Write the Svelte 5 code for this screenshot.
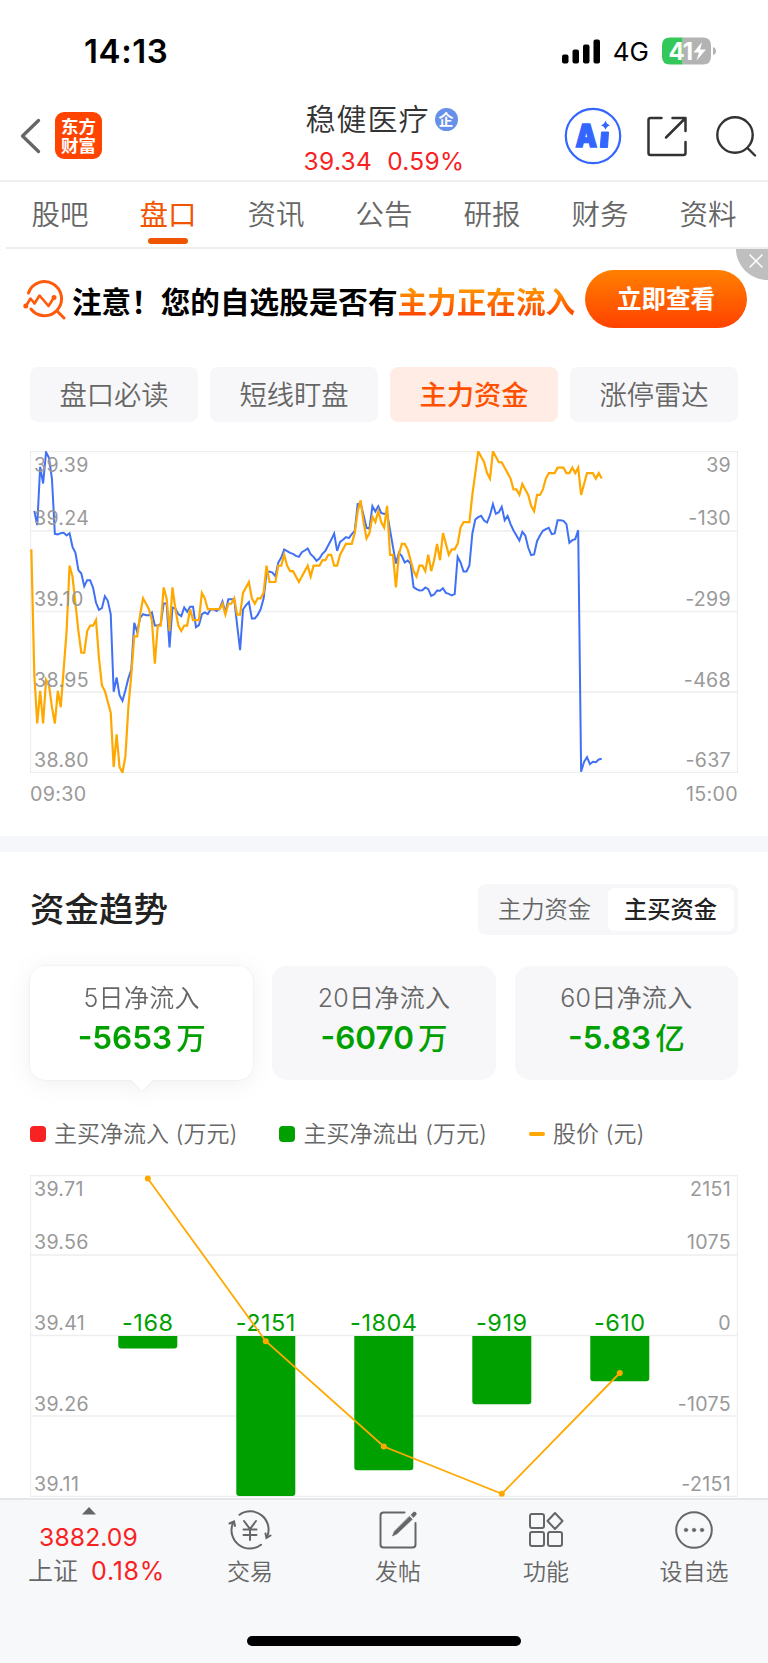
<script lang="ts">
	const tabs = ['股吧', '盘口', '资讯', '公告', '研报', '财务', '资料'];
	const chips = ['盘口必读', '短线盯盘', '主力资金', '涨停雷达'];
	const ranges = [
		{ label: '5日净流入', value: '-5653', unit: '万' },
		{ label: '20日净流入', value: '-6070', unit: '万' },
		{ label: '60日净流入', value: '-5.83', unit: '亿' }
	];

	let activeTab = $state('盘口');
	let activeChip = $state('主力资金');
	let activeMode = $state('主买资金');
	let activeRange = $state(0);
	let showBanner = $state(true);

	const WIDTH = 708;
	const GRID = [0.5, 80, 160.5, 241, 321.5];
	const LABELS = [20.5, 73.5, 154.5, 235.5, 316];

	// Minute prices, in cents above 38.80
	const priceTicks = [
		41, 18, 9, 15, 9, 17, 16, 12, 9, 15, 12, 19, 26, 38, 36, 31, 26, 22, 22, 26, 27, 27, 28, 21, 16,
		15, 13, 11, 1, 7, 1, 0, 3, 12, 18, 25, 25, 29, 32, 31, 30, 28, 20, 27, 27, 34, 32, 26, 34, 30,
		27, 26, 27, 27, 30, 28, 28, 28, 33, 32, 30, 30, 30, 30, 30, 31, 29, 31, 31, 32, 29, 29, 33, 34,
		35, 32, 31, 32, 32, 33, 38, 35, 35, 35, 38, 38, 40, 38, 37, 37, 36, 35, 36, 37, 38, 36, 38, 38,
		38, 39, 39, 40, 40, 38, 38, 40, 41, 42, 42, 42, 44, 48, 50, 46, 43, 44, 47, 46, 48, 46, 45, 49,
		40, 40, 34, 40, 42, 42, 41, 39, 37, 36, 38, 38, 37, 40, 37, 39, 42, 39, 44, 42, 40, 41, 41, 42,
		45, 46, 46, 46, 51, 55, 59, 58, 57, 55, 54, 59, 58, 57, 57, 56, 55, 54, 52, 52, 51, 53, 52, 51,
		49, 48, 51, 51, 52, 54, 55, 55, 55, 56, 56, 56, 55, 55, 56, 55, 56, 51, 53, 55, 55, 55, 54, 55,
		54
	];

	// Net main-force flow per minute, from the second minute on (34 = top of the plot, 998 = bottom)
	const flowTicks = [
		212, 255, 80, 130, 36, 53, 115, 281, 283, 279, 278, 286, 279, 320, 338, 390, 400, 438, 420, 420,
		443, 488, 509, 504, 468, 482, 522, 755, 712, 765, 782, 750, 714, 688, 548, 575, 533, 522, 525,
		525, 517, 556, 556, 552, 490, 490, 622, 502, 505, 522, 528, 502, 515, 500, 500, 561, 555, 522,
		517, 522, 507, 508, 513, 506, 484, 518, 477, 477, 477, 555, 630, 508, 495, 486, 535, 535, 524,
		507, 475, 400, 394, 397, 408, 367, 352, 328, 333, 338, 341, 347, 350, 336, 331, 325, 342, 350,
		362, 355, 341, 332, 315, 299, 280, 332, 305, 299, 291, 294, 282, 272, 192, 190, 225, 263, 265,
		198, 214, 198, 218, 221, 218, 270, 320, 370, 338, 348, 367, 361, 370, 441, 447, 451, 450, 442,
		447, 467, 463, 451, 452, 444, 458, 461, 466, 462, 350, 367, 394, 394, 376, 280, 238, 231, 227,
		241, 247, 225, 192, 221, 216, 200, 240, 227, 252, 271, 286, 301, 275, 286, 322, 345, 343, 303,
		286, 272, 267, 263, 282, 280, 240, 240, 242, 252, 308, 300, 297, 270, 995, 965, 951, 972, 965,
		966, 958, 956
	];

	const minuteX = (i: number) => (1.35 + i * 2.94).toFixed(2);
	const priceLine = priceTicks
		.map((t, i) => `${minuteX(i)},${(321.5 - t * 5.443).toFixed(2)}`)
		.join(' ');
	const flowLine = flowTicks
		.map((t, i) => `${minuteX(i + 1)},${((t - 34) / 3 + 0.5).toFixed(2)}`)
		.join(' ');

	const intradayLeft = ['39.39', '39.24', '39.10', '38.95', '38.80'];
	const intradayRight = ['39', '-130', '-299', '-468', '-637'];
	const trendLeft = ['39.71', '39.56', '39.41', '39.26', '39.11'];
	const trendRight = ['2151', '1075', '0', '-1075', '-2151'];

	const days = [
		{ flow: -168, priceY: 3.5 },
		{ flow: -2151, priceY: 166.2 },
		{ flow: -1804, priceY: 271.5 },
		{ flow: -919, priceY: 318.8 },
		{ flow: -610, priceY: 198 }
	];
	const dayX = (i: number) => 118 * (i + 1) - 0.2;
	const barHeight = (flow: number) => (Math.abs(flow) / 2151) * 160;
	const barPath = (i: number, flow: number) => {
		const l = dayX(i) - 29.5;
		const r = dayX(i) + 29.5;
		const b = 161 + barHeight(flow);
		return `M${l} 161H${r}V${b - 3}Q${r} ${b} ${r - 3} ${b}H${l + 3}Q${l} ${b} ${l} ${b - 3}Z`;
	};
	const dayLine = days.map((d, i) => `${dayX(i)},${d.priceY}`).join(' ');
</script>

{#snippet axes(left: string[], right: string[])}
	{#each left as text, i}
		<text class="axis" x="4" y={LABELS[i]}>{text}</text>
		<text class="axis end" x={WIDTH - 7} y={LABELS[i]}>{right[i]}</text>
	{/each}
{/snippet}

{#snippet grid()}
	{#each GRID as y}
		<line class="grid" x1="0" x2={WIDTH} y1={y} y2={y} />
	{/each}
	<line class="grid" x1="0.5" x2="0.5" y1="0" y2="322" />
	<line class="grid" x1={WIDTH - 0.5} x2={WIDTH - 0.5} y1="0" y2="322" />
{/snippet}

<div class="screen">
	<div class="status">
		<span class="time">14:13</span>
		<div class="status-right">
			<svg class="signal" width="39" height="25" viewBox="0 0 39 25">
				<rect x="0" y="15.5" width="6.5" height="9" rx="2" />
				<rect x="10.5" y="10.5" width="6.5" height="14" rx="2" />
				<rect x="21" y="5.5" width="6.5" height="19" rx="2" />
				<rect x="31.5" y="0.5" width="6.5" height="24" rx="2" />
			</svg>
			<span class="network">4G</span>
			<svg width="54" height="28" viewBox="0 0 54 28">
				<path d="M8 .5H20.700V27.500H8Q0 27.500 0 19.500V8.500Q0 .5 8 .5Z" fill="#34c759" />
				<path d="M20.700 .5H41Q49 .5 49 8.500V19.500Q49 27.500 41 27.500H20.700Z" fill="#b3b3b3" />
				<path d="M51 10Q54 11 54 14T51 18Z" fill="#b3b3b3" />
				<text class="battery-text" x="6.500" y="22.500">41</text>
				<path d="M40 5 31.500 15.500H37L34.500 23.500 44 12.500H38.200Z" fill="#fff" />
			</svg>
		</div>
	</div>

	<header>
		<div class="header-left">
			<svg width="21" height="36" viewBox="0 0 21 36">
				<path d="M18.500 2.500 2.500 18 18.500 33.500" fill="none" stroke="#666" stroke-width="3.300" stroke-linecap="round" stroke-linejoin="round" />
			</svg>
			<div class="app-logo"><span>东方</span><span>财富</span></div>
		</div>
		<div class="stock">
			<div class="stock-name">稳健医疗<span class="badge">企</span></div>
			<div class="stock-price"><span>39.34</span><span>0.59%</span></div>
		</div>
		<div class="header-right">
			<svg width="58" height="58" viewBox="0 0 58 58">
				<circle cx="29" cy="29" r="27.200" fill="none" stroke="#3366ff" stroke-width="2.200" />
				<text class="ai-text" x="11.500" y="39.500" textLength="21.500" lengthAdjust="spacingAndGlyphs">A</text>
				<path d="M37.500 25H44.500L43.500 40.500H36.300Z" fill="#3366ff" stroke="#3366ff" stroke-linejoin="round" />
				<path d="M41.500 13.500Q42.300 17 46 18.200 42.500 19.200 41.500 22.800 40.500 19.200 37 18.200 40.700 17 41.500 13.500Z" fill="#3366ff" />
			</svg>
			<svg class="share" width="40" height="41" viewBox="0 0 40 41" fill="none" stroke="#333" stroke-width="2.500" stroke-linecap="round" stroke-linejoin="round">
				<path d="M14.500 2H3.500Q1.500 2 1.500 4V37Q1.500 39 3.500 39H36.500Q38.500 39 38.500 37V26" />
				<path d="M25.500 2H38.500V15M38 2.500 19 21.500" />
			</svg>
			<svg width="41" height="41" viewBox="0 0 41 41" fill="none" stroke="#333" stroke-width="2.400" stroke-linecap="round">
				<circle cx="19" cy="19" r="17.700" />
				<path d="M31.500 32 39 39.500" />
			</svg>
		</div>
	</header>

	<nav class="tabs">
		{#each tabs as tab}
			<button class="tab" class:active={tab === activeTab} onclick={() => (activeTab = tab)}>{tab}</button>
		{/each}
	</nav>

	{#if showBanner}
		<div class="banner">
			<svg width="43" height="41" viewBox="0 0 43 41" fill="none" stroke="#ff5a0a" stroke-width="3" stroke-linecap="round">
				<path d="M5.500 13A17 17 0 1 1 8 29" />
				<path d="M34 31 41 38" />
				<path d="M3 26 7.500 18.500 11.500 23.500 16.500 15.500 25.500 26 31 17.500" stroke-linejoin="round" stroke-width="2.600" />
				<circle cx="2.800" cy="26" r="1" />
				<circle cx="31" cy="17.500" r="1" />
			</svg>
			<p>注意！您的自选股是否有<em>主力正在流入</em></p>
			<button class="cta">立即查看</button>
			<button class="close" aria-label="关闭" onclick={() => (showBanner = false)}>
				<svg width="32" height="31" viewBox="0 0 32 31">
					<path d="M0 0H32V31A32 31 0 0 1 0 0Z" fill="#bfbfbf" />
					<path d="M14 6 26 18M26 6 14 18" stroke="#fff" stroke-width="1.500" stroke-linecap="round" />
				</svg>
			</button>
		</div>
	{/if}

	<div class="chips">
		{#each chips as chip}
			<button class="chip" class:active={chip === activeChip} onclick={() => (activeChip = chip)}>{chip}</button>
		{/each}
	</div>

	<section class="intraday">
		<svg width={WIDTH} height="322" viewBox="0 0 {WIDTH} 322">
			{@render grid()}
			<polyline points={flowLine} fill="none" stroke="#4071f5" stroke-width="2" />
			<polyline points={priceLine} fill="none" stroke="#ffa800" stroke-width="2.200" />
			{@render axes(intradayLeft, intradayRight)}
		</svg>
		<div class="times"><span>09:30</span><span>15:00</span></div>
	</section>

	<div class="divider"></div>

	<section class="trend">
		<div class="trend-head">
			<h2>资金趋势</h2>
			<div class="switch">
				{#each ['主力资金', '主买资金'] as mode}
					<button class:active={mode === activeMode} onclick={() => (activeMode = mode)}>{mode}</button>
				{/each}
			</div>
		</div>

		<div class="cards">
			{#each ranges as range, i}
				<button class="card" class:active={i === activeRange} onclick={() => (activeRange = i)}>
					<span class="card-label">{range.label}</span>
					<span class="card-value">{range.value}<i>{range.unit}</i></span>
				</button>
			{/each}
		</div>

		<div class="legend">
			<span class="legend-item"><b class="mark red"></b>主买净流入 (万元)</span>
			<span class="legend-item"><b class="mark green"></b>主买净流出 (万元)</span>
			<span class="legend-item"><b class="mark line"></b>股价 (元)</span>
		</div>

		<svg class="trend-chart" width={WIDTH} height="322" viewBox="0 0 {WIDTH} 322">
			{@render grid()}
			{#each days as day, i}
				<path d={barPath(i, day.flow)} fill="#00a000" />
				<text class="bar-label" x={dayX(i)} y="156">{day.flow}</text>
			{/each}
			<polyline points={dayLine} fill="none" stroke="#ffa800" stroke-width="1.800" />
			{#each days as day, i}
				<circle cx={dayX(i)} cy={day.priceY} r="3" fill="#ffa800" />
			{/each}
			{@render axes(trendLeft, trendRight)}
		</svg>
	</section>

	<footer>
		<div class="toolbar">
			<div class="index">
				<svg width="14" height="8" viewBox="0 0 14 8"><path d="M7 0 14 7.500H0Z" fill="#666" /></svg>
				<span class="index-value">3882.09</span>
				<span class="index-row">上证<span>0.18%</span></span>
			</div>
			<div class="tool">
				<svg width="44" height="40" viewBox="0 0 44 40">
					<path d="M11.500 4.800A18.300 18.300 0 0 1 39 27M33 34.700A18.300 18.300 0 0 1 5 13" />
					<path d="M1.500 13.500 6 11.500 7 16M42.500 25.500 38.500 28 37.500 23.500" />
					<path d="M16 11 22 19 28 11M22 19V30M15.500 19.500H28.500M15.500 25H28.500" />
				</svg>
				<span>交易</span>
			</div>
			<div class="tool">
				<svg width="44" height="40" viewBox="0 0 44 40">
					<path d="M28.500 2.500H7.500Q4.500 2.500 4.500 5.500V34.500Q4.500 37.500 7.500 37.500H36.500Q39.500 37.500 39.500 34.500V13" />
					<path class="solid" d="M33.500 6.500 36.300 9.300 21 23.800 16.500 26 18.300 21.500Z" />
					<path class="solid" d="M35 4.800 37.500 2.300Q39 1.500 40 2.800 40.800 4 39.800 5L37.500 7.500Z" />
				</svg>
				<span>发帖</span>
			</div>
			<div class="tool">
				<svg width="44" height="40" viewBox="0 0 44 40">
					<rect x="6" y="4" width="14" height="14" rx="2" />
					<rect x="6" y="22" width="14" height="14" rx="2" />
					<rect x="24" y="22" width="14" height="14" rx="2" />
					<path d="M31 3 38.500 11 31 19 23.500 11Z" stroke-linejoin="round" />
				</svg>
				<span>功能</span>
			</div>
			<div class="tool">
				<svg width="44" height="40" viewBox="0 0 44 40">
					<circle cx="22" cy="20" r="17.800" />
					<circle class="solid" cx="14" cy="20" r="1.800" />
					<circle class="solid" cx="22" cy="20" r="1.800" />
					<circle class="solid" cx="30" cy="20" r="1.800" />
				</svg>
				<span>设自选</span>
			</div>
		</div>
		<div class="home-indicator"></div>
	</footer>
</div>

<style>
	:global(body) {
		margin: 0;
		background: #fff;
	}

	.screen {
		display: flex;
		flex-direction: column;
		width: 768px;
		height: 1663px;
		overflow: hidden;
		background: #fff;
		color: #333;
		font-family: Inter, 'Noto Sans CJK SC', sans-serif;
	}

	svg {
		display: block;
		flex: none;
	}

	button {
		padding: 0;
		border: 0;
		background: none;
		color: inherit;
		font: inherit;
		cursor: pointer;
	}

	.status {
		display: flex;
		align-items: center;
		justify-content: space-between;
		height: 102px;
		padding: 0 52px 0 84px;
		box-sizing: border-box;
		color: #000;
	}

	.time {
		font-size: 33px;
		font-weight: 600;
		letter-spacing: 0.6px;
	}

	.status-right {
		display: flex;
		align-items: center;
	}

	.network {
		margin: 1px 13px 0 12px;
		font-size: 26px;
	}

	.battery-text {
		fill: #fff;
		font-size: 24px;
		font-weight: 700;
		letter-spacing: -1px;
	}

	header {
		display: grid;
		grid-template-columns: 1fr auto 1fr;
		align-items: center;
		height: 80px;
		box-sizing: border-box;
		border-bottom: 2px solid #eee;
	}

	.header-left,
	.header-right {
		display: flex;
		align-items: center;
		padding-bottom: 10px;
	}

	.header-left {
		gap: 14px;
		padding-bottom: 11px;
		padding-left: 20px;
	}

	.header-right {
		justify-content: flex-end;
		padding-right: 11px;
	}

	.share {
		margin: 0 29px 0 25px;
	}

	.app-logo {
		display: flex;
		flex-direction: column;
		align-items: center;
		justify-content: center;
		width: 47px;
		height: 47px;
		border-radius: 9px;
		background: #ff4400;
		color: #fff;
		font-size: 17.5px;
		font-weight: 700;
		line-height: 19px;
	}

	.stock {
		display: flex;
		flex-direction: column;
		align-items: center;
		align-self: start;
		gap: 9px;
		padding-top: 2px;
	}

	.stock-name {
		display: flex;
		align-items: center;
		height: 31px;
		margin-right: 5px;
		font-size: 30px;
		font-weight: 350;
		line-height: 31px;
		letter-spacing: 1px;
	}

	.badge {
		width: 23px;
		margin-left: 5px;
		border-radius: 50%;
		background: #6690ea;
		color: #fff;
		font-size: 15px;
		font-weight: 700;
		line-height: 23px;
		text-align: center;
		letter-spacing: 0;
	}

	.stock-price {
		display: flex;
		gap: 15px;
		height: 34px;
		align-items: center;
		color: #f82222;
		font-size: 24.5px;
		letter-spacing: 0.3px;
	}

	.ai-text {
		fill: #3366ff;
		stroke: #3366ff;
		stroke-width: 1.5px;
		font-size: 31px;
		font-weight: 900;
	}

	.tabs {
		display: flex;
		justify-content: space-between;
		height: 67px;
		margin-left: 6px;
		padding: 0 30px 0 24px;
		box-sizing: border-box;
		border-bottom: 2px solid #eee;
	}

	.tab {
		position: relative;
		width: 60px;
		height: 65px;
		padding-bottom: 4px;
		color: #666;
		font-size: 28.5px;
		font-weight: 350;
	}

	.tab.active {
		color: #f25500;
		font-weight: 400;
	}

	.tab.active::after {
		content: '';
		position: absolute;
		bottom: 3px;
		left: 10px;
		width: 40px;
		height: 6px;
		border-radius: 3px;
		background: #ee5500;
	}

	.banner {
		position: relative;
		display: flex;
		align-items: center;
		height: 103px;
		padding: 0 21px 0 23px;
	}

	.banner p {
		margin: 3px 0 0 6px;
		color: #000;
		font-size: 29.6px;
		font-weight: 700;
		line-height: 44px;
		white-space: nowrap;
	}

	.banner em {
		background: linear-gradient(#ff9500 15%, #ff4800 85%);
		background-clip: text;
		-webkit-background-clip: text;
		color: transparent;
		font-style: normal;
	}

	.cta {
		width: 162px;
		height: 58px;
		margin: 0 0 3px auto;
		padding-bottom: 3px;
		border-radius: 29px;
		background: linear-gradient(#ff8000, #ff4200);
		color: #fff;
		font-size: 24.5px;
		font-weight: 700;
	}

	.close {
		position: absolute;
		top: 0;
		right: 0;
	}

	.chips {
		display: flex;
		gap: 12px;
		padding: 15px 30px 0;
	}

	.chip {
		flex: 1;
		height: 55px;
		padding-bottom: 3px;
		border-radius: 8px;
		background: #f7f7fa;
		color: #666;
		font-size: 27.3px;
		font-weight: 350;
	}

	.chip.active {
		background: #ffede5;
		color: #ff5000;
		font-weight: 500;
	}

	.intraday {
		height: 414px;
		padding: 29px 30px 0;
		box-sizing: border-box;
	}

	.grid {
		stroke: #eee;
		stroke-width: 1.3px;
	}

	.axis {
		fill: #999;
		font-size: 19.6px;
		letter-spacing: 0.3px;
	}

	.end {
		text-anchor: end;
	}

	.times {
		display: flex;
		justify-content: space-between;
		margin-top: 8px;
		color: #999;
		font-size: 19.7px;
		line-height: 26px;
		letter-spacing: 0.3px;
	}

	.divider {
		height: 16px;
		background: #f5f7fa;
	}

	.trend {
		height: 646px;
		padding: 32px 30px 0;
		box-sizing: border-box;
		overflow: hidden;
	}

	.trend-head {
		display: flex;
		align-items: center;
		justify-content: space-between;
		height: 51px;
	}

	h2 {
		margin: 0;
		color: #222;
		font-size: 34.5px;
		font-weight: 500;
		line-height: 50px;
	}

	.switch {
		display: flex;
		padding: 4px;
		border-radius: 8px;
		background: #f7f7fa;
	}

	.switch button {
		width: 126px;
		height: 43px;
		padding: 0 1px 3px 0;
		border-radius: 6px;
		color: #666;
		font-size: 23.3px;
		font-weight: 350;
	}

	.switch button.active {
		background: #fff;
		color: #222;
		font-weight: 500;
	}

	.cards {
		display: flex;
		gap: 19px;
		margin-top: 31px;
	}

	.card {
		position: relative;
		display: flex;
		flex: 1;
		flex-direction: column;
		align-items: center;
		height: 114px;
		padding-top: 12px;
		box-sizing: border-box;
		border-radius: 15px;
		background: #f7f7fa;
	}

	.card.active {
		background: #fff;
		filter: drop-shadow(0 0 1px rgba(0, 0, 0, 0.08)) drop-shadow(0 3px 11px rgba(0, 0, 0, 0.06));
	}

	.card.active::after {
		content: '';
		position: absolute;
		top: 113px;
		left: 50%;
		margin-left: -12px;
		border: 12px solid transparent;
		border-bottom: 0;
		border-top-color: #fff;
	}

	.card-label {
		color: #666;
		font-size: 25px;
		font-weight: 350;
		line-height: 40px;
		letter-spacing: 0.3px;
	}

	.card-value {
		color: #00a000;
		font-size: 31.5px;
		font-weight: 600;
		line-height: 40px;
	}

	.card-value i {
		margin-left: 4px;
		font-size: 29.5px;
		font-style: normal;
		font-weight: 500;
	}

	.legend {
		display: flex;
		gap: 42px;
		margin-top: 37px;
		color: #666;
		font-size: 23px;
		font-weight: 350;
		line-height: 34px;
	}

	.legend-item {
		display: flex;
		align-items: center;
		white-space: nowrap;
	}

	.mark {
		width: 16px;
		height: 16px;
		margin-right: 8px;
		border-radius: 4px;
	}

	.red {
		background: #f82222;
	}

	.green {
		background: #00a000;
	}

	.line {
		height: 4px;
		border-radius: 2px;
		background: #ffa800;
	}

	.trend-chart {
		margin-top: 24px;
	}

	.bar-label {
		fill: #00a000;
		font-size: 23.5px;
		letter-spacing: 0.5px;
		text-anchor: middle;
	}

	footer {
		display: flex;
		flex: 1;
		flex-direction: column;
		align-items: center;
		border-top: 2px solid #e4e6e9;
		background: #f6f8fa;
	}

	.toolbar {
		display: flex;
		width: 100%;
	}

	.index {
		display: flex;
		flex-direction: column;
		align-items: center;
		width: 176px;
		padding-top: 7px;
		padding-left: 1px;
		box-sizing: border-box;
		color: #f82222;
	}

	.index-value {
		margin-top: 5px;
		font-size: 24.7px;
		line-height: 34px;
		letter-spacing: 0.1px;
	}

	.index-row {
		padding-left: 16px;
		color: #666;
		font-size: 25px;
		font-weight: 350;
		line-height: 35px;
	}

	.index-row span {
		margin-left: 13px;
		color: #f82222;
		font-size: 25px;
		font-weight: 400;
		letter-spacing: 0.7px;
	}

	.tool {
		display: flex;
		flex: 1;
		flex-direction: column;
		align-items: center;
		padding-top: 10px;
		color: #666;
		font-size: 23px;
		font-weight: 350;
		line-height: 34px;
	}

	.tool svg {
		margin-bottom: 5px;
		fill: none;
		stroke: #666;
		stroke-width: 2px;
		stroke-linecap: round;
	}

	.tool .solid {
		fill: #666;
		stroke-width: 0.6px;
	}

	.home-indicator {
		width: 274px;
		height: 10px;
		margin-top: 47px;
		border-radius: 5px;
		background: #000;
	}
</style>
